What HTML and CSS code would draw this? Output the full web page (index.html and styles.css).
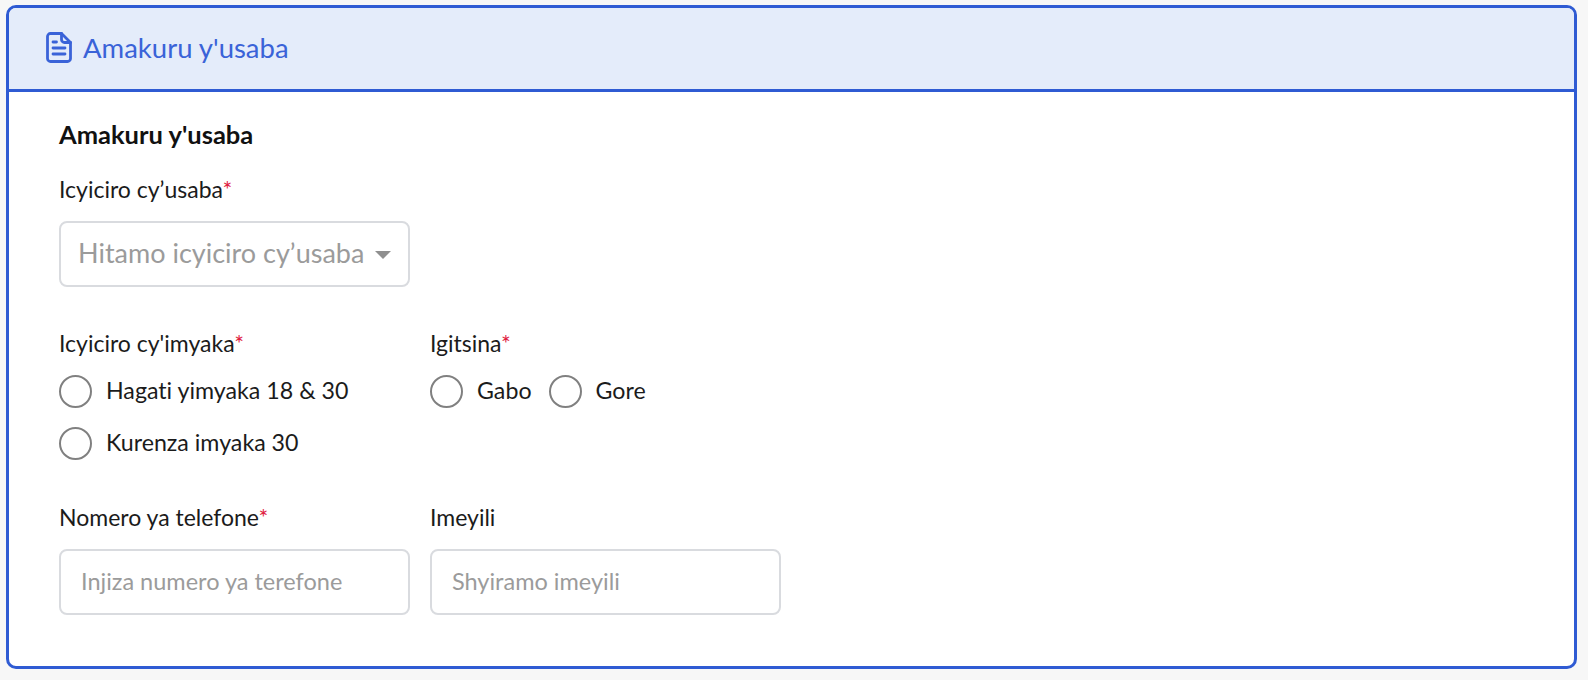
FILE: index.html
```html
<!DOCTYPE html>
<html lang="en">

<head>
    <meta charset="UTF-8">
    <meta name="viewport" content="width=device-width, initial-scale=1.0">
    <title>Amakuru y'usaba</title>
    <link rel="stylesheet" href="styles.css">
</head>

<body>
    <div class="card">
        <div class="card-header">
            <svg class="header-icon" viewBox="0 0 26 31" fill="none" stroke="#3a63d8" stroke-width="2.8" stroke-linejoin="round" stroke-linecap="round">
                <path d="M4.5 1.5h11l9 9v16a3 3 0 0 1-3 3h-17a3 3 0 0 1-3-3v-22a3 3 0 0 1 3-3z"/>
                <path d="M15.5 1.5v6a3 3 0 0 0 3 3h6"/>
                <path d="M7 10h3.500M7 16h12M7 22h12"/>
            </svg>
            <span class="header-title">Amakuru y'usaba</span>
        </div>
        <div class="card-body">
            <h2 class="section-title">Amakuru y'usaba</h2>

            <div class="row row-category">
                <div class="field">
                    <label class="field-label" for="category">Icyiciro cy’usaba<span class="required">*</span></label>
                    <div class="select-box">
                        <select id="category" class="select-input">
                            <option selected>Hitamo icyiciro cy’usaba</option>
                        </select>
                    </div>
                </div>
            </div>

            <div class="row row-radios">
                <div class="field">
                    <span class="field-label">Icyiciro cy'imyaka<span class="required">*</span></span>
                    <div class="radio-stack">
                        <label class="radio-item"><input type="radio" name="age" class="radio"> <span class="radio-text">Hagati yimyaka 18 &amp; 30</span></label>
                        <label class="radio-item"><input type="radio" name="age" class="radio"> <span class="radio-text">Kurenza imyaka 30</span></label>
                    </div>
                </div>
                <div class="field">
                    <span class="field-label">Igitsina<span class="required">*</span></span>
                    <div class="radio-line">
                        <label class="radio-item"><input type="radio" name="gender" class="radio"> <span class="radio-text">Gabo</span></label>
                        <label class="radio-item"><input type="radio" name="gender" class="radio"> <span class="radio-text">Gore</span></label>
                    </div>
                </div>
            </div>

            <div class="row">
                <div class="field">
                    <label class="field-label" for="phone">Nomero ya telefone<span class="required">*</span></label>
                    <input type="text" id="phone" class="text-input" placeholder="Injiza numero ya terefone">
                </div>
                <div class="field">
                    <label class="field-label" for="email">Imeyili</label>
                    <input type="text" id="email" class="text-input" placeholder="Shyiramo imeyili">
                </div>
            </div>
        </div>
    </div>
</body>

</html>
```

FILE: styles.css
```css
body {
    margin: 0;
    padding: 5px 11px 11px 6px;
    background-color: #f7f7f7;
    font-family: 'Lato', 'Noto Sans', sans-serif;
    font-variant-ligatures: none;
    color: #1b1b1b;
}

.card {
    height: 664px;
    box-sizing: border-box;
    border: 3px solid #2f5bd3;
    border-radius: 10px;
    background-color: #ffffff;
    overflow: hidden;
}

.card-header {
    display: flex;
    align-items: center;
    gap: 11px;
    height: 81px;
    padding-left: 37px;
    background-color: #e4ecfa;
    border-bottom: 3px solid #2f5bd3;
}

.header-icon {
    width: 26px;
    height: 31px;
    margin-top: -2px;
}

.header-title {
    padding-bottom: 3px;
    font-size: 27.5px;
    color: #3a63d8;
}

.card-body {
    padding: 0 50px;
}

.section-title {
    margin: 28px 0 0;
    font-size: 25.5px;
    line-height: 28px;
    font-weight: 700;
    color: #111111;
}

.row {
    display: flex;
    gap: 20px;
}

.row-category {
    margin-top: 27px;
}

.row-radios {
    margin-top: 42px;
}

.row-radios + .row {
    margin-top: 43px;
}

.field {
    display: flex;
    flex-direction: column;
    width: 351px;
}

.field-label {
    font-size: 23px;
    line-height: 28px;
}

.required {
    color: #e0203f;
}

.select-box {
    position: relative;
    margin-top: 18px;
}

.select-box::after {
    content: "";
    position: absolute;
    right: 19px;
    top: 30px;
    border-left: 8px solid transparent;
    border-right: 8px solid transparent;
    border-top: 8px solid #8f8f8f;
    pointer-events: none;
}

.select-input {
    appearance: none;
    width: 100%;
    height: 66px;
    box-sizing: border-box;
    padding: 0 17px 3px;
    border: 2px solid #d9dbdf;
    border-radius: 8px;
    background-color: #fff;
    font-family: inherit;
    font-variant-ligatures: none;
    font-size: 27px;
    color: #9b9b9b;
}

.text-input {
    height: 66px;
    box-sizing: border-box;
    margin-top: 18px;
    padding: 0 20px 2px;
    border: 2px solid #d9dbdf;
    border-radius: 8px;
    font-family: inherit;
    font-variant-ligatures: none;
    font-size: 23.5px;
}

.text-input::placeholder {
    color: #9b9b9b;
    opacity: 1;
}

.radio-stack {
    display: flex;
    flex-direction: column;
    gap: 19px;
    margin-top: 18px;
}

.radio-line {
    display: flex;
    gap: 17px;
    margin-top: 18px;
}

.radio-item {
    display: flex;
    align-items: center;
    gap: 14px;
    height: 33px;
    font-size: 23.2px;
}

.radio-text {
    padding-bottom: 3px;
}

.radio {
    appearance: none;
    width: 33px;
    height: 33px;
    margin: 0;
    border: 2px solid #808080;
    border-radius: 50%;
    background-color: #fff;
}
```
